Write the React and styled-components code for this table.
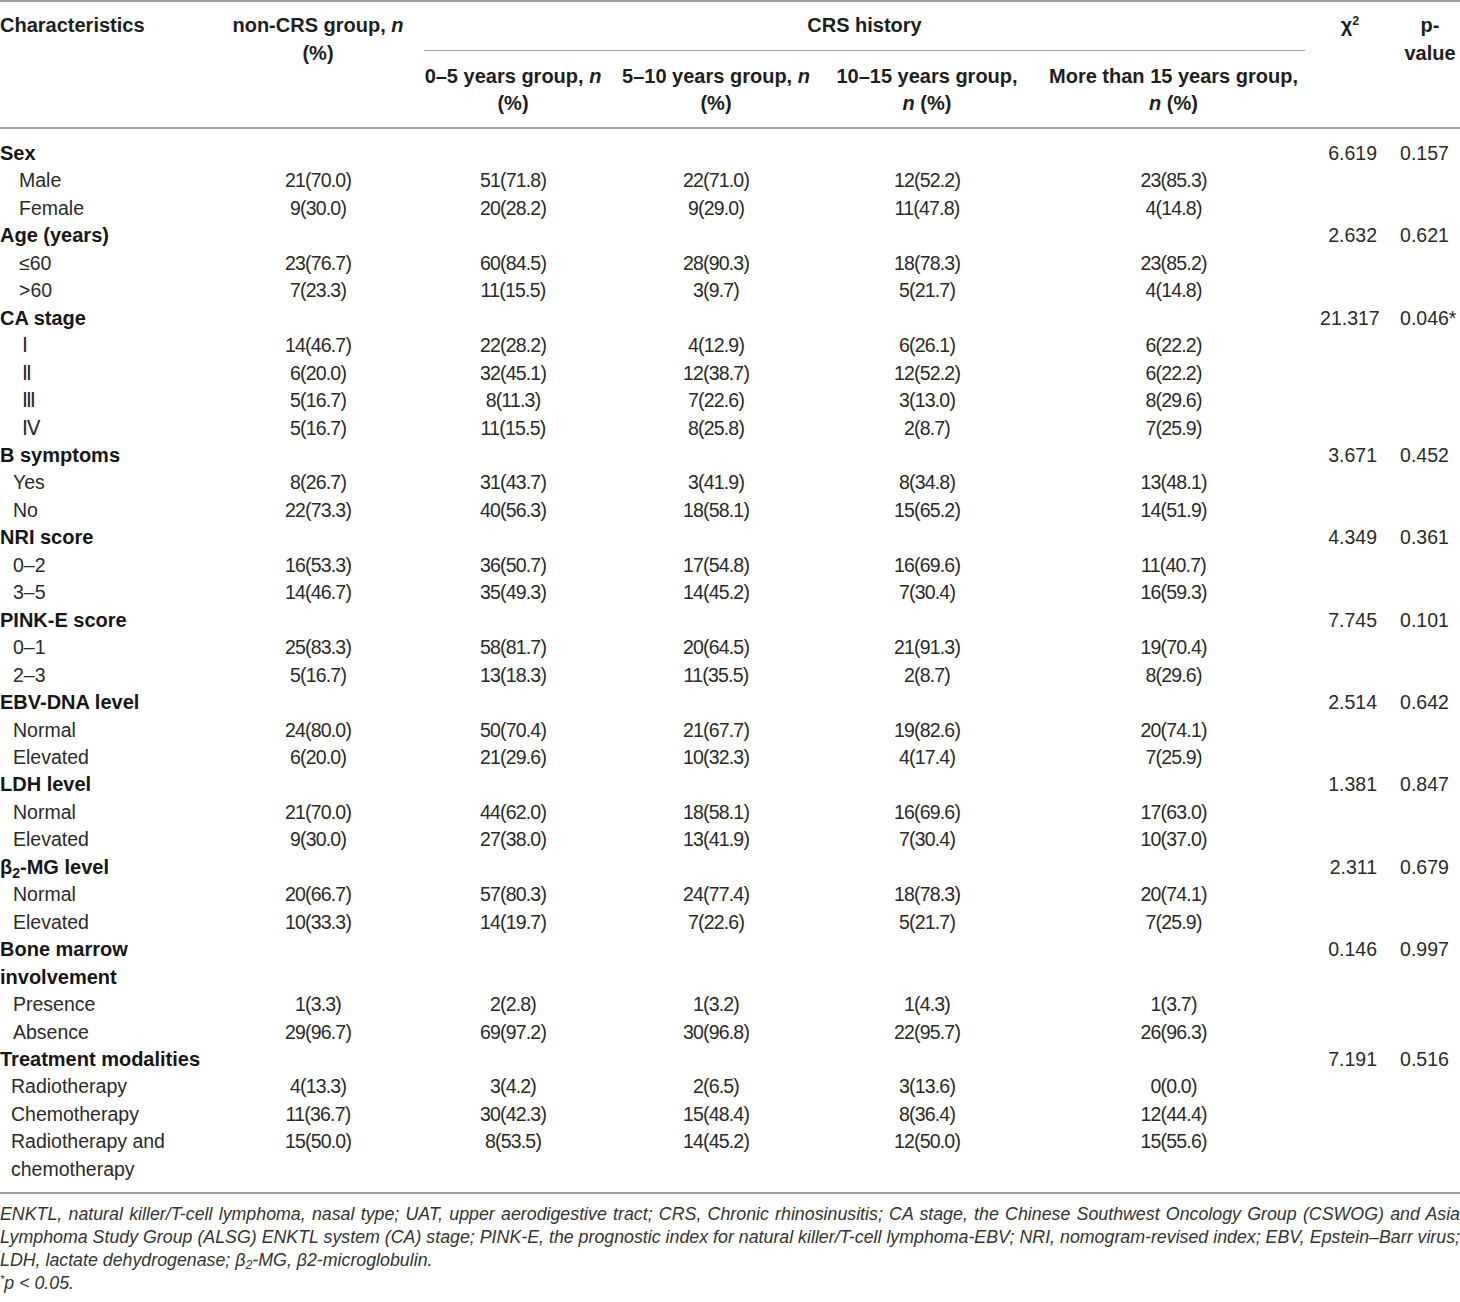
import React from "react";
import styled, { createGlobalStyle } from "styled-components";

const GlobalStyle = createGlobalStyle`
  body {
    margin: 0;
    background: #fff;
  }
`;

const Page = styled.div`
  width: 1460px;
  font-family: "Liberation Sans", Arial, sans-serif;
  color: #222;
`;

const Table = styled.table`
  width: 1460px;
  table-layout: fixed;
  border-collapse: collapse;
  border-top: 2px solid #9d9d9d;
  border-bottom: 2px solid #9d9d9d;
`;

const Col = styled.col`
  width: ${(p) => p.$w}px;
`;

const Thead = styled.thead`
  border-bottom: 2px solid #a5a5a5;
`;

const Th = styled.th`
  font-size: 20px;
  line-height: 27.5px;
  font-weight: 700;
  color: #1e1e1e;
  white-space: nowrap;
  vertical-align: top;
  text-align: ${(p) => p.$align || "center"};
  padding: ${(p) => (p.$sub ? "12px 0 9.5px" : "10px 0 0")};
  padding-left: ${(p) => p.$pl || 0}px;
  padding-right: ${(p) => p.$pr || 0}px;
`;

const Rule = styled.div`
  padding-bottom: 10px;
  border-bottom: 1px solid #9d9d9d;
`;

const Sup = styled.sup`
  font-size: 0.62em;
  line-height: 0;
  vertical-align: 0.55em;
`;

const Sub = styled.sub`
  font-size: 0.7em;
  line-height: 0;
  vertical-align: -0.28em;
`;

const Tbody = styled.tbody`
  & > tr:first-child > td {
    padding-top: 11px;
  }
  & > tr:last-child > td {
    padding-bottom: 9px;
  }
`;

const Td = styled.td`
  font-size: 19.5px;
  line-height: 27.45px;
  padding: 0;
  vertical-align: top;
  white-space: nowrap;
  color: #2a2a2a;
`;

const LabelCell = styled(Td)`
  text-align: left;
  padding-left: ${(p) => p.$indent || 0}px;
  font-size: ${(p) => (p.$group ? "20px" : "19.5px")};
  font-weight: ${(p) => (p.$group ? 700 : 400)};
  color: ${(p) => (p.$group ? "#161616" : "#2a2a2a")};
`;

const CountCell = styled(Td)`
  text-align: center;
  letter-spacing: -0.8px;
`;

const ChiCell = styled(Td)`
  text-align: right;
  padding-right: 13px;
`;

const PCell = styled(Td)`
  text-align: left;
  padding-left: 10px;
`;

const Notes = styled.div`
  padding-top: 9px;
  font-style: italic;
  font-size: 17.8px;
  line-height: 23px;
  color: #333;
`;

const NoteLine = styled.div`
  text-align: ${(p) => (p.$justify ? "justify" : "left")};
  text-align-last: ${(p) => (p.$justify ? "justify" : "left")};
`;

const groups = [
  {
    label: "Sex",
    chi: "6.619",
    p: "0.157",
    indent: 19,
    rows: [
      ["Male", "21(70.0)", "51(71.8)", "22(71.0)", "12(52.2)", "23(85.3)"],
      ["Female", "9(30.0)", "20(28.2)", "9(29.0)", "11(47.8)", "4(14.8)"],
    ],
  },
  {
    label: "Age (years)",
    chi: "2.632",
    p: "0.621",
    indent: 19,
    rows: [
      ["≤60", "23(76.7)", "60(84.5)", "28(90.3)", "18(78.3)", "23(85.2)"],
      [">60", "7(23.3)", "11(15.5)", "3(9.7)", "5(21.7)", "4(14.8)"],
    ],
  },
  {
    label: "CA stage",
    chi: "21.317",
    p: "0.046*",
    indent: 22,
    rows: [
      ["Ⅰ", "14(46.7)", "22(28.2)", "4(12.9)", "6(26.1)", "6(22.2)"],
      ["Ⅱ", "6(20.0)", "32(45.1)", "12(38.7)", "12(52.2)", "6(22.2)"],
      ["Ⅲ", "5(16.7)", "8(11.3)", "7(22.6)", "3(13.0)", "8(29.6)"],
      ["Ⅳ", "5(16.7)", "11(15.5)", "8(25.8)", "2(8.7)", "7(25.9)"],
    ],
  },
  {
    label: "B symptoms",
    chi: "3.671",
    p: "0.452",
    indent: 13,
    rows: [
      ["Yes", "8(26.7)", "31(43.7)", "3(41.9)", "8(34.8)", "13(48.1)"],
      ["No", "22(73.3)", "40(56.3)", "18(58.1)", "15(65.2)", "14(51.9)"],
    ],
  },
  {
    label: "NRI score",
    chi: "4.349",
    p: "0.361",
    indent: 13,
    rows: [
      ["0–2", "16(53.3)", "36(50.7)", "17(54.8)", "16(69.6)", "11(40.7)"],
      ["3–5", "14(46.7)", "35(49.3)", "14(45.2)", "7(30.4)", "16(59.3)"],
    ],
  },
  {
    label: "PINK-E score",
    chi: "7.745",
    p: "0.101",
    indent: 13,
    rows: [
      ["0–1", "25(83.3)", "58(81.7)", "20(64.5)", "21(91.3)", "19(70.4)"],
      ["2–3", "5(16.7)", "13(18.3)", "11(35.5)", "2(8.7)", "8(29.6)"],
    ],
  },
  {
    label: "EBV-DNA level",
    chi: "2.514",
    p: "0.642",
    indent: 13,
    rows: [
      ["Normal", "24(80.0)", "50(70.4)", "21(67.7)", "19(82.6)", "20(74.1)"],
      ["Elevated", "6(20.0)", "21(29.6)", "10(32.3)", "4(17.4)", "7(25.9)"],
    ],
  },
  {
    label: "LDH level",
    chi: "1.381",
    p: "0.847",
    indent: 13,
    rows: [
      ["Normal", "21(70.0)", "44(62.0)", "18(58.1)", "16(69.6)", "17(63.0)"],
      ["Elevated", "9(30.0)", "27(38.0)", "13(41.9)", "7(30.4)", "10(37.0)"],
    ],
  },
  {
    label: (
      <>
        β<Sub>2</Sub>-MG level
      </>
    ),
    chi: "2.311",
    p: "0.679",
    indent: 13,
    rows: [
      ["Normal", "20(66.7)", "57(80.3)", "24(77.4)", "18(78.3)", "20(74.1)"],
      ["Elevated", "10(33.3)", "14(19.7)", "7(22.6)", "5(21.7)", "7(25.9)"],
    ],
  },
  {
    label: (
      <>
        Bone marrow
        <br />
        involvement
      </>
    ),
    chi: "0.146",
    p: "0.997",
    indent: 13,
    rows: [
      ["Presence", "1(3.3)", "2(2.8)", "1(3.2)", "1(4.3)", "1(3.7)"],
      ["Absence", "29(96.7)", "69(97.2)", "30(96.8)", "22(95.7)", "26(96.3)"],
    ],
  },
  {
    label: "Treatment modalities",
    chi: "7.191",
    p: "0.516",
    indent: 11,
    rows: [
      ["Radiotherapy", "4(13.3)", "3(4.2)", "2(6.5)", "3(13.6)", "0(0.0)"],
      ["Chemotherapy", "11(36.7)", "30(42.3)", "15(48.4)", "8(36.4)", "12(44.4)"],
      [
        <>
          Radiotherapy and
          <br />
          chemotherapy
        </>,
        "15(50.0)",
        "8(53.5)",
        "14(45.2)",
        "12(50.0)",
        "15(55.6)",
      ],
    ],
  },
];

const widths = [215, 206, 184, 222, 200, 293, 70, 70];

const GroupRows = ({ group }) => (
  <>
    <tr>
      <LabelCell $group>{group.label}</LabelCell>
      <CountCell />
      <CountCell />
      <CountCell />
      <CountCell />
      <CountCell />
      <ChiCell>{group.chi}</ChiCell>
      <PCell>{group.p}</PCell>
    </tr>
    {group.rows.map(([label, ...counts], i) => (
      <tr key={i}>
        <LabelCell $indent={group.indent}>{label}</LabelCell>
        {counts.map((c, j) => (
          <CountCell key={j}>{c}</CountCell>
        ))}
        <ChiCell />
        <PCell />
      </tr>
    ))}
  </>
);

const App = () => {
  return (
    <Page>
      <GlobalStyle />
      <Table>
        <colgroup>
          {widths.map((w, i) => (
            <Col key={i} $w={w} />
          ))}
        </colgroup>
        <Thead>
          <tr>
            <Th rowSpan={2} $align="left">
              Characteristics
            </Th>
            <Th rowSpan={2}>
              non-CRS group, <i>n</i>
              <br />
              (%)
            </Th>
            <Th colSpan={4} $pl={3} $pr={15}>
              <Rule>CRS history</Rule>
            </Th>
            <Th rowSpan={2} $pr={10}>
              χ<Sup>2</Sup>
            </Th>
            <Th rowSpan={2} $pl={10}>
              p-
              <br />
              value
            </Th>
          </tr>
          <tr>
            <Th $sub>
              0–5 years group, <i>n</i>
              <br />
              (%)
            </Th>
            <Th $sub>
              5–10 years group, <i>n</i>
              <br />
              (%)
            </Th>
            <Th $sub>
              10–15 years group,
              <br />
              <i>n</i> (%)
            </Th>
            <Th $sub>
              More than 15 years group,
              <br />
              <i>n</i> (%)
            </Th>
          </tr>
        </Thead>
        <Tbody>
          {groups.map((g, i) => (
            <GroupRows key={i} group={g} />
          ))}
        </Tbody>
      </Table>
      <Notes>
        <NoteLine $justify>
          ENKTL, natural killer/T-cell lymphoma, nasal type; UAT, upper aerodigestive tract; CRS, Chronic
          rhinosinusitis; CA stage, the Chinese Southwest Oncology Group (CSWOG) and Asia
        </NoteLine>
        <NoteLine $justify>
          Lymphoma Study Group (ALSG) ENKTL system (CA) stage; PINK-E, the prognostic index for natural
          killer/T-cell lymphoma-EBV; NRI, nomogram-revised index; EBV, Epstein–Barr virus;
        </NoteLine>
        <NoteLine>
          LDH, lactate dehydrogenase; β<Sub>2</Sub>-MG, β2-microglobulin.
        </NoteLine>
        <NoteLine>
          <Sup>*</Sup>p &lt; 0.05.
        </NoteLine>
      </Notes>
    </Page>
  );
};

export default App;
